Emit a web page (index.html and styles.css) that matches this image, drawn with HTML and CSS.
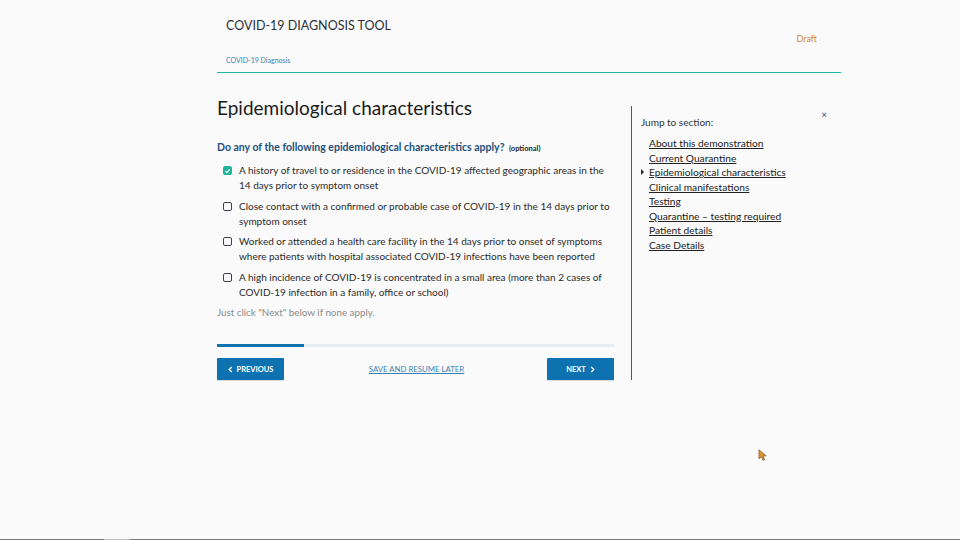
FILE: index.html
```html
<!DOCTYPE html>
<html>
<head>
<meta charset="utf-8">
<link rel="stylesheet" href="styles.css">
</head>
<body>
<div class="page">
  <header class="header">
    <div class="header-top">
      <div class="title">COVID-19 DIAGNOSIS TOOL</div>
      <div class="draft">Draft</div>
    </div>
    <div class="crumb">COVID-19 Diagnosis</div>
  </header>
  <div class="main">
    <section class="form">
      <h1 class="heading">Epidemiological characteristics</h1>
      <div class="question">Do any of the following epidemiological characteristics apply? <span class="optional">(optional)</span></div>
      <ul class="options">
        <li class="option"><span class="box checked"><svg viewBox="0 0 10 10" width="8" height="8"><path d="M2 5.2 L4.2 7.2 L8 2.8" fill="none" stroke="#fff" stroke-width="1.8"/></svg></span><span class="label">A history of travel to or residence in the COVID-19 affected geographic areas in the 14 days prior to symptom onset</span></li>
        <li class="option"><span class="box"></span><span class="label">Close contact with a confirmed or probable case of COVID-19 in the 14 days prior to symptom onset</span></li>
        <li class="option"><span class="box"></span><span class="label">Worked or attended a health care facility in the 14 days prior to onset of symptoms where patients with hospital associated COVID-19 infections have been reported</span></li>
        <li class="option"><span class="box"></span><span class="label">A high incidence of COVID-19 is concentrated in a small area (more than 2 cases of COVID-19 infection in a family, office or school)</span></li>
      </ul>
      <div class="hint">Just click "Next" below if none apply.</div>
      <div class="progress"><div class="progress-fill" style="width:22%"></div></div>
      <div class="actions">
        <button class="btn"><svg viewBox="0 0 6 8" width="5" height="7"><path d="M4.5 1 L1.5 4 L4.5 7" fill="none" stroke="#fff" stroke-width="1.6"/></svg>PREVIOUS</button>
        <a class="save">SAVE AND RESUME LATER</a>
        <button class="btn btn-next">NEXT<svg viewBox="0 0 6 8" width="5" height="7"><path d="M1.5 1 L4.5 4 L1.5 7" fill="none" stroke="#fff" stroke-width="1.6"/></svg></button>
      </div>
    </section>
    <aside class="side">
      <div class="side-head">
        <div class="jump">Jump to section:</div>
        <div class="close">×</div>
      </div>
      <ul class="toc">
        <li><a>About this demonstration</a></li>
        <li><a>Current Quarantine</a></li>
        <li class="current"><a>Epidemiological characteristics</a></li>
        <li><a>Clinical manifestations</a></li>
        <li><a>Testing</a></li>
        <li><a>Quarantine – testing required</a></li>
        <li><a>Patient details</a></li>
        <li><a>Case Details</a></li>
      </ul>
    </aside>
  </div>
</div>
<svg class="cursor" viewBox="0 0 12 16" width="10" height="13"><path d="M1 1 L1 12 L4 9.5 L6 14 L8 13 L6 8.5 L10 8.5 Z" fill="#d9952e" stroke="#7a5020" stroke-width="0.8"/></svg>
<div class="bottom-bar"><span class="bottom-seg"></span></div>
</body>
</html>
```
FILE: styles.css
```css
* { box-sizing: border-box; }
html, body { margin: 0; padding: 0; }
body {
  background: #fafafa;
  font-family: Lato, "Open Sans", sans-serif;
  color: #222;
  width: 960px;
  height: 540px;
  overflow: hidden;
  position: relative;
}
.page {
  width: 624px;
  margin-left: 217px;
}
.header {
  border-bottom: 1.5px solid #1fb5a0;
  padding: 18px 0 0 9px;
  height: 73px;
}
.header-top {
  display: flex;
  justify-content: space-between;
}
.title {
  font-size: 12.5px;
  color: #2a2f3a;
  line-height: 16px;
}
.draft {
  font-size: 9px;
  color: #d0892c;
  margin-top: 15px;
  margin-right: 24px;
  line-height: 12px;
}
.crumb {
  font-size: 7px;
  color: #3c7fb3;
  margin-top: 9px;
  line-height: 12px;
}
.main {
  display: flex;
  margin-top: 24px;
}
.form {
  width: 397px;
}
.heading {
  font-weight: 400;
  font-size: 19px;
  margin: 0;
  line-height: 21px;
  color: #1a1a1a;
}
.question {
  margin-top: 22px;
  font-size: 10.5px;
  font-weight: 700;
  color: #1f4f7a;
  line-height: 14px;
}
.optional {
  font-size: 7.5px;
  color: #222;
  font-weight: 700;
  margin-left: 2px;
}
.options {
  list-style: none;
  margin: 7px 0 0 0;
  padding: 0 0 0 6px;
}
.option {
  display: flex;
  align-items: flex-start;
  margin-bottom: 5.6px;
}
.box {
  width: 9px;
  height: 9px;
  border: 1.2px solid #3a4250;
  border-radius: 2px;
  margin-top: 3px;
  margin-right: 7px;
  flex: none;
  display: flex;
  align-items: center;
  justify-content: center;
}
.box.checked {
  background: #1fb59c;
  border-color: #1fb59c;
}
.label {
  font-size: 10px;
  line-height: 15px;
  color: #2a2a2a;
}
.hint {
  font-size: 9.8px;
  color: #8a8a8a;
  line-height: 14px;
  margin-top: 5px;
}
.progress {
  margin-top: 25px;
  height: 3px;
  background: #e6edf2;
}
.progress-fill {
  height: 100%;
  background: #0f72b0;
}
.actions {
  display: flex;
  justify-content: space-between;
  align-items: center;
  margin-top: 11px;
}
.btn {
  height: 22px;
  width: 67px;
  background: #0f72b0;
  border: none;
  border-radius: 1px;
  color: #fff;
  font-family: Lato, sans-serif;
  font-weight: 700;
  font-size: 7.5px;
  display: flex;
  align-items: center;
  justify-content: center;
  gap: 4px;
  padding: 0;
  box-shadow: 0 1px 1px rgba(0,0,0,0.15);
}
.save {
  font-size: 7.8px;
  color: #3c7fb3;
  text-decoration: underline;
  margin-left: 2px;
}
.side {
  margin-left: 17px;
  margin-top: 9px;
  border-left: 1.5px solid #2b6b62;
  height: 274px;
  width: 210px;
  padding: 8px 0 0 9px;
}
.side-head {
  display: flex;
  justify-content: space-between;
}
.jump {
  font-size: 10px;
  margin-top: 2px;
  color: #333;
}
.close {
  font-size: 10px;
  color: #1f4f7a;
  margin-right: 14px;
  line-height: 10px;
  margin-top: -5px;
}
.toc {
  list-style: none;
  margin: 8px 0 0 0;
  padding: 0 0 0 8px;
}
.toc li {
  font-size: 10.2px;
  line-height: 14.5px;
  position: relative;
}
.toc a {
  color: #222;
  text-decoration: underline;
}
.toc li.current::before {
  content: "";
  position: absolute;
  left: -8px;
  top: 4px;
  border-left: 3px solid #222;
  border-top: 3px solid transparent;
  border-bottom: 3px solid transparent;
}
.cursor {
  position: absolute;
  left: 758px;
  top: 449px;
}
.bottom-bar {
  position: absolute;
  left: 0;
  bottom: 0;
  width: 960px;
  height: 1px;
  background: #777;
}
.bottom-seg {
  position: absolute;
  left: 104px;
  width: 26px;
  height: 1px;
  background: #bbb;
}
```
